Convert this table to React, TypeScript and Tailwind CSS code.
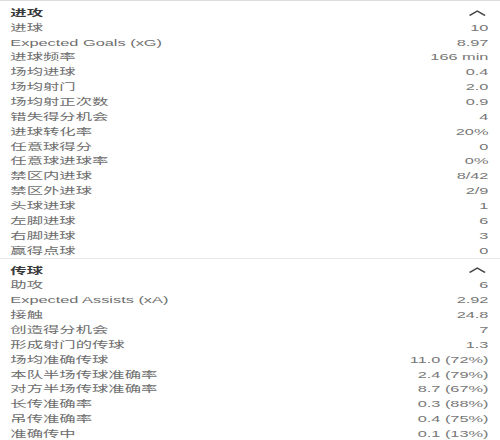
const attack: [string, string][] = [
  ['进球', '10'],
  ['Expected Goals (xG)', '8.97'],
  ['进球频率', '166 min'],
  ['场均进球', '0.4'],
  ['场均射门', '2.0'],
  ['场均射正次数', '0.9'],
  ['错失得分机会', '4'],
  ['进球转化率', '20%'],
  ['任意球得分', '0'],
  ['任意球进球率', '0%'],
  ['禁区内进球', '8/42'],
  ['禁区外进球', '2/9'],
  ['头球进球', '1'],
  ['左脚进球', '6'],
  ['右脚进球', '3'],
  ['赢得点球', '0'],
];

const passing: [string, string][] = [
  ['助攻', '6'],
  ['Expected Assists (xA)', '2.92'],
  ['接触', '24.8'],
  ['创造得分机会', '7'],
  ['形成射门的传球', '1.3'],
  ['场均准确传球', '11.0 (72%)'],
  ['本队半场传球准确率', '2.4 (79%)'],
  ['对方半场传球准确率', '8.7 (67%)'],
  ['长传准确率', '0.3 (88%)'],
  ['吊传准确率', '0.4 (75%)'],
  ['准确传中', '0.1 (13%)'],
];

const Chevron = () => (
  <svg width="11" height="6" viewBox="0 0 11 6" fill="none" className="text-[#444]">
    <polyline points="1,5.5 5.5,1 10,5.5" stroke="currentColor" strokeWidth="1.1" />
  </svg>
);

const Section = ({ title, rows }: { title: string; rows: [string, string][] }) => (
  <section className="pt-1">
    <div className="flex items-center justify-between h-[15px] px-[6px] pr-[8px]">
      <span className="font-bold text-[#3a3a3a]">{title}</span>
      <Chevron />
    </div>
    {rows.map(([label, value]) => (
      <div key={label} className="flex items-center justify-between h-[14.87px] px-[6px] pr-[7px]">
        <span className="text-[#6e6e6e]">{label}</span>
        <span className="text-[#777]">{value}</span>
      </div>
    ))}
  </section>
);

export default function App() {
  return (
    <div className="w-[500px] h-[440px] overflow-hidden bg-white">
      <div
        className="w-[291px] origin-top-left scale-x-[1.72] border-t border-[#dcdcdc] text-[9.5px] leading-none"
        style={{ fontFamily: '"Liberation Sans", "Noto Sans CJK SC", sans-serif' }}
      >
        <div className="border-b border-[#e8e8e8]">
          <Section title="进攻" rows={attack} />
        </div>
        <Section title="传球" rows={passing} />
      </div>
    </div>
  );
}
